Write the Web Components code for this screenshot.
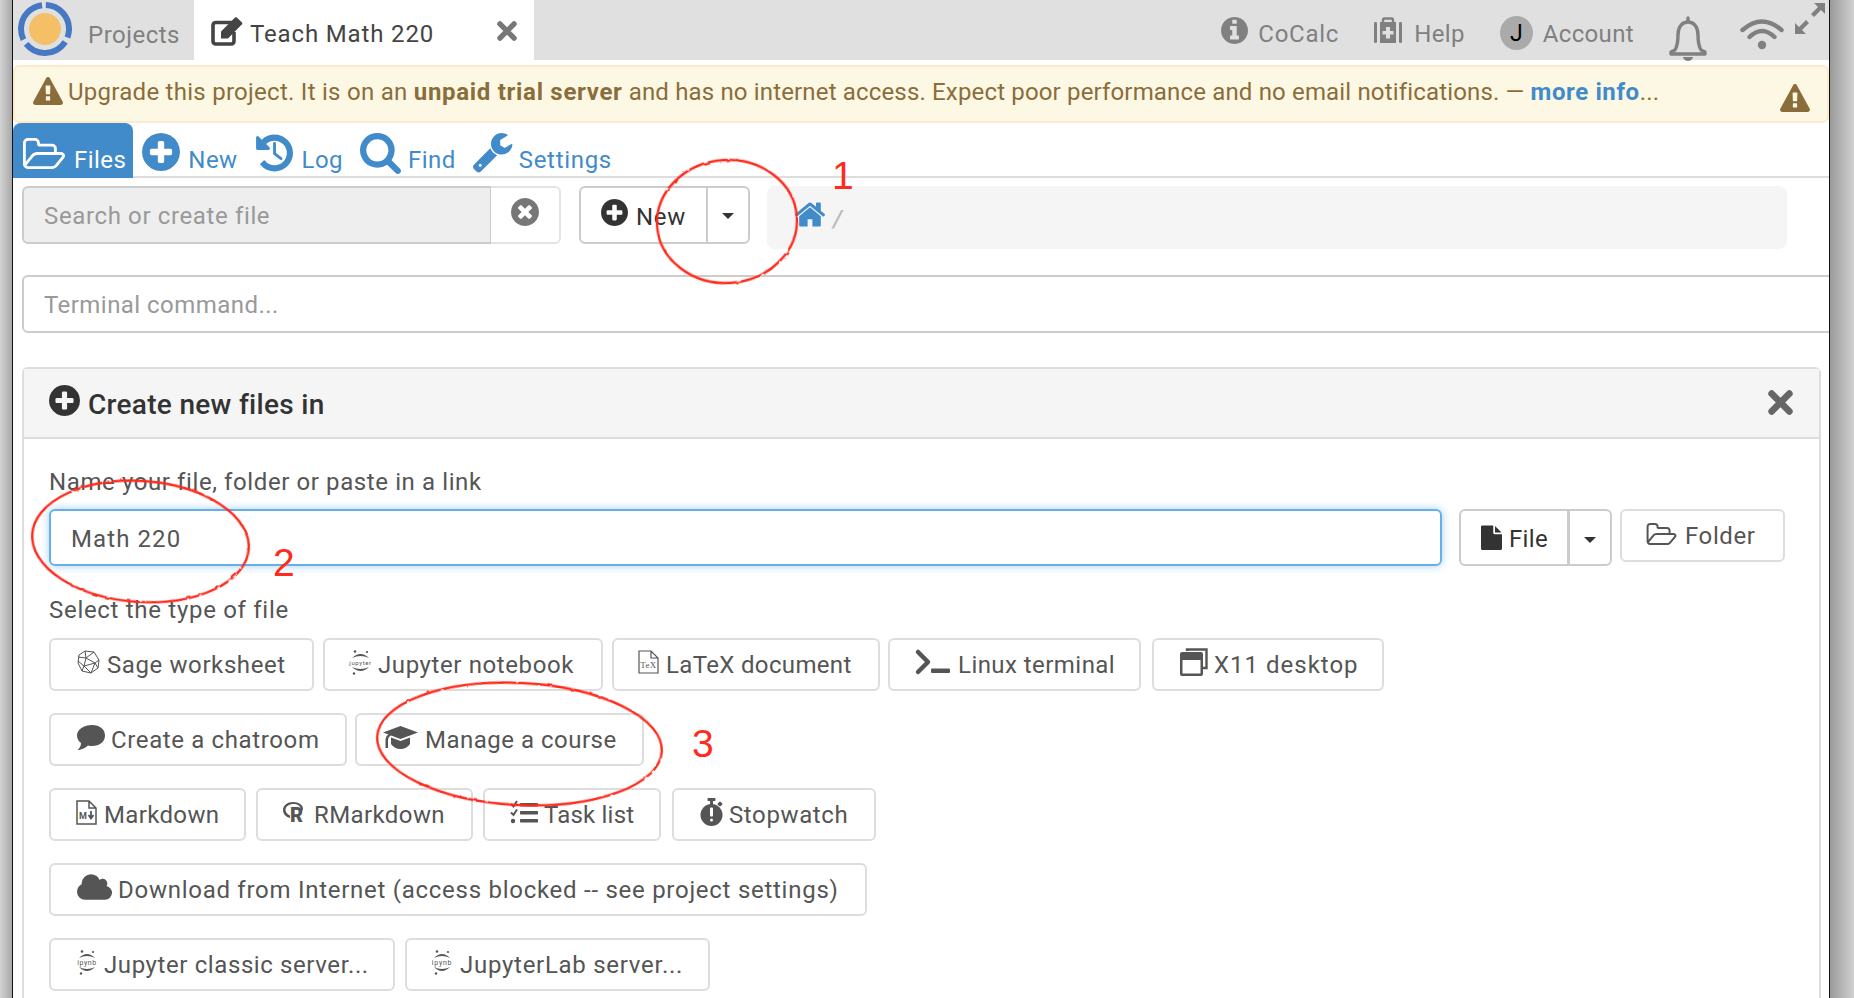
<!DOCTYPE html>
<html>
<head>
<meta charset="utf-8">
<title>Teach Math 220</title>
<style>
  html, body { margin: 0; padding: 0; height: 100%; overflow: hidden; background: #fff; }
  body { font-family: Roboto, "Liberation Sans", sans-serif; font-size: 24px; color: #555; }
</style>
</head>
<body>

<cc-window>
  <cc-topbar>
    <cc-project-tab slot="left">Projects</cc-project-tab>
    <cc-file-tab slot="left">Teach Math 220</cc-file-tab>
    <cc-nav-item slot="right" icon="info" iw="27" ih="27" gap="10" mr="35" ls=".75">CoCalc</cc-nav-item>
    <cc-nav-item slot="right" icon="medkit" iw="28" ih="26" gap="12" mr="35">Help</cc-nav-item>
    <cc-nav-item slot="right" icon="avatar" iw="33" ih="34" gap="10" mr="34" drop="3">Account</cc-nav-item>
    <cc-nav-item slot="right" icon="bell" iw="40" ih="45" gap="0" mr="32" drop="8"></cc-nav-item>
    <cc-nav-item slot="right" icon="wifi" iw="44" ih="30" gap="0" mr="11" drop="4"></cc-nav-item>
    <cc-nav-item slot="right" icon="expand" iw="30" ih="31" gap="0" mr="4" drop="-12"></cc-nav-item>
  </cc-topbar>

  <cc-alert><span style="letter-spacing:.27px">Upgrade this project. It is on an </span><b>unpaid trial server</b><span style="letter-spacing:.16px"> and has no internet access. Expect poor performance and no email notifications. — </span><a>more info</a>...</cc-alert>

  <cc-tabs>
    <cc-tab-link active icon="folder" iw="44" ih="31" gap="8" left="9" right="7">Files</cc-tab-link>
    <cc-tab-link icon="plus" iw="38" ih="38" gap="8" left="9" right="15">New</cc-tab-link>
    <cc-tab-link icon="history" iw="40" ih="40" gap="9" left="0" right="17">Log</cc-tab-link>
    <cc-tab-link icon="search" iw="41" ih="41" gap="7" left="0" right="16">Find</cc-tab-link>
    <cc-tab-link icon="wrench" iw="41" ih="40" gap="6" left="0" right="0" ls=".7">Settings</cc-tab-link>
  </cc-tabs>

  <cc-toolbar></cc-toolbar>
  <cc-terminal>Terminal command...</cc-terminal>

  <cc-panel>
    <span slot="title">Create new files in</span>

    <cc-label>Name your file, folder or paste in a link</cc-label>
    <cc-name-row>Math 220</cc-name-row>
    <cc-label second>Select the type of file</cc-label>

    <cc-btn-row>
      <cc-btn w="265" ls=".6" icon="sage" iw="23" ih="24" gap="7" style="margin-right:-2px">Sage worksheet</cc-btn>
      <cc-btn w="280" pad="25" ls=".6" icon="jupyter" iw="21" ih="25" gap="7" style="margin-right:-2px">Jupyter notebook</cc-btn>
      <cc-btn w="268" pad="24" icon="latex" iw="21" ih="24" gap="7" style="margin-right:-3px">LaTeX document</cc-btn>
      <cc-btn w="253" pad="25" ls=".45" icon="terminal" iw="35" ih="24" gap="8">Linux terminal</cc-btn>
      <cc-btn w="232" ls="1" icon="x11" iw="28" ih="28" gap="6">X11 desktop</cc-btn>
    </cc-btn-row>
    <cc-btn-row>
      <cc-btn w="298" ls=".63" icon="comment" iw="28" ih="25" gap="6" style="margin-right:-3px">Create a chatroom</cc-btn>
      <cc-btn w="289" ls=".5" icon="cap" iw="35" ih="23" gap="7">Manage a course</cc-btn>
    </cc-btn-row>
    <cc-btn-row>
      <cc-btn w="197" pad="25" icon="markdown" iw="21" ih="25" gap="7" style="margin-right:-1px">Markdown</cc-btn>
      <cc-btn w="217" pad="25" ls=".4" icon="rlogo" iw="22" ih="21" gap="9" style="margin-right:-1px">RMarkdown</cc-btn>
      <cc-btn w="178" pad="25" ls=".2" icon="tasks" iw="28" ih="24" gap="6">Task list</cc-btn>
      <cc-btn w="204" ls=".62" icon="stopwatch" iw="23" ih="28" gap="6">Stopwatch</cc-btn>
    </cc-btn-row>
    <cc-btn-row>
      <cc-btn w="818" ls=".73" icon="cloud" iw="35" ih="26" gap="6">Download from Internet (access blocked -- see project settings)</cc-btn>
    </cc-btn-row>
    <cc-btn-row>
      <cc-btn w="346" ls=".6" icon="ipynb" iw="20" ih="25" gap="7" style="margin-right:-1px">Jupyter classic server...</cc-btn>
      <cc-btn w="305" pad="25" ls=".72" icon="ipynb" iw="20" ih="25" gap="8">JupyterLab server...</cc-btn>
    </cc-btn-row>
  </cc-panel>

  <cc-mark slot="overlay" x="656" y="159" w="142" h="125" tilt="-4"></cc-mark>
  <cc-mark slot="overlay" x="31" y="480" w="219" h="123" tilt="4"></cc-mark>
  <cc-mark slot="overlay" x="376" y="682" w="287" h="124" tilt="3"></cc-mark>
  <cc-digit slot="overlay" x="832" y="153">1</cc-digit>
  <cc-digit slot="overlay" x="273" y="540">2</cc-digit>
  <cc-digit slot="overlay" x="692" y="721">3</cc-digit>
</cc-window>

<script>
const ICONS = {
  plus: ['128 128 1536 1536', '<path d="M1344 960v-128q0-26-19-45t-45-19h-256v-256q0-26-19-45t-45-19h-128q-26 0-45 19t-19 45v256h-256q-26 0-45 19t-19 45v128q0 26 19 45t45 19h256v256q0 26 19 45t45 19h128q26 0 45-19t19-45v-256h256q26 0 45-19t19-45zm320-64q0 209-103 385.5t-279.5 279.5-385.5 103-385.5-103-279.5-279.5-103-385.5 103-385.5 279.5-279.5 385.5-103 385.5 103 279.5 279.5 103 385.5z"/>'],
  timesCircle: ['128 128 1536 1536', '<path d="M1277 1122q0-26-19-45l-181-181 181-181q19-19 19-45 0-27-19-46l-90-90q-19-19-46-19-26 0-45 19l-181 181-181-181q-19-19-45-19-27 0-46 19l-90 90q-19 19-19 46 0 26 19 45l181 181-181 181q-19 19-19 45 0 27 19 46l90 90q19 19 46 19 26 0 45-19l181-181 181 181q19 19 45 19 27 0 46-19l90-90q19-19 19-46zm387-226q0 209-103 385.5t-279.5 279.5-385.5 103-385.5-103-279.5-279.5-103-385.5 103-385.5 279.5-279.5 385.5-103 385.5 103 279.5 279.5 103 385.5z"/>'],
  info: ['128 128 1536 1536', '<path d="M1152 1376v-160q0-14-9-23t-23-9h-96v-512q0-14-9-23t-23-9h-320q-14 0-23 9t-9 23v160q0 14 9 23t23 9h96v320h-96q-14 0-23 9t-9 23v160q0 14 9 23t23 9h448q14 0 23-9t9-23zm-128-896v-160q0-14-9-23t-23-9h-192q-14 0-23 9t-9 23v160q0 14 9 23t23 9h192q14 0 23-9t9-23zm640 416q0 209-103 385.5t-279.5 279.5-385.5 103-385.5-103-279.5-279.5-103-385.5 103-385.5 279.5-279.5 385.5-103 385.5 103 279.5 279.5 103 385.5z"/>'],
  times: ['0 0 24 24', '<path d="M3.500 3.500l17 17M20.500 3.500l-17 17" fill="none" stroke="currentColor" stroke-width="6.400" stroke-linecap="round"/>'],
  warning: ['0 64 1792 1600', '<path d="M1024 1375v-190q0-14-9.5-23.5t-22.5-9.5h-192q-13 0-22.5 9.5t-9.5 23.5v190q0 14 9.5 23.5t22.5 9.5h192q13 0 22.5-9.5t9.5-23.5zm-2-374l18-459q0-12-10-19-13-11-24-11h-220q-11 0-24 11-10 7-10 21l17 457q0 10 10 16.5t24 6.5h185q14 0 23.5-6.5t10.5-16.5zm-14-934l768 1408q35 63-2 126-17 29-46.5 46t-63.5 17h-1536q-34 0-63.5-17t-46.5-46q-37-63-2-126l768-1408q17-31 47-49t65-18 65 18 47 49z"/>'],
  edit: ['0 0 32 29', '<path d="M21 5.500H5q-3 0-3 3V24q0 3 3 3h15q3 0 3-3V15" fill="none" stroke="currentColor" stroke-width="3.600"/><path d="M10 14.500L24 .5q1-.6 1.800 0l5.200 5q.7.9 0 1.800L17 21.500h-7z"/>'],
  folder: ['0 128 1909 1408', '<path d="M1781 931q0-35-53-35h-1088q-40 0-85.5 21.5t-71.5 52.5l-294 363q-18 24-18 40 0 35 53 35h1088q40 0 86-22t71-53l294-363q18-22 18-39zm-1141-163h768v-160q0-40-28-68t-68-28h-576q-40 0-68-28t-28-68v-64q0-40-28-68t-68-28h-320q-40 0-68 28t-28 68v853l256-315q44-53 116-87.5t140-34.5zm1269 163q0 62-46 120l-295 363q-43 53-116 87.5t-140 34.5h-1088q-92 0-158-66t-66-158v-960q0-92 66-158t158-66h320q92 0 158 66t66 158v32h544q92 0 158 66t66 158v160h192q54 0 99 24.5t67 70.5q15 32 15 68z"/>'],
  history: ['0 128 1664 1536', '<path d="M1664 896q0 156-61 298t-164 245-245 164-298 61q-172 0-327-72.5t-264-204.5q-7-10-6.5-22.5t8.5-20.5l137-138q10-9 25-9 16 2 23 12 73 95 179 147t225 52q104 0 198.5-40.5t163.5-109.5 109.5-163.5 40.5-198.5-40.5-198.5-109.5-163.5-163.5-109.5-198.5-40.5q-98 0-188 35.5t-160 101.5l137 138q31 30 14 69-17 40-59 40h-448q-26 0-45-19t-19-45v-448q0-42 40-59 39-17 69 14l130 129q107-101 244.5-156.5t284.5-55.5q156 0 298 61t245 164 164 245 61 298z"/><path d="M896 500v420l270 210" fill="none" stroke="currentColor" stroke-width="120" stroke-linecap="round" stroke-linejoin="round"/>'],
  search: ['64 128 1664 1664', '<path d="M1216 832q0-185-131.5-316.5t-316.5-131.5-316.5 131.5-131.5 316.5 131.5 316.5 316.5 131.5 316.5-131.5 131.5-316.5zm512 832q0 52-38 90t-90 38q-54 0-90-38l-343-342q-179 124-399 124-143 0-273.5-55.5t-225-150-150-225-55.5-273.5 55.5-273.5 150-225 225-150 273.5-55.5 273.5 55.5 225 150 150 225 55.5 273.5q0 220-124 399l343 343q37 37 37 90z"/>'],
  wrench: ['64 128 1664 1664', '<path d="M448 1472q0-26-19-45t-45-19-45 19-19 45 19 45 45 19 45-19 19-45zm644-420l-682 682q-37 37-90 37-52 0-91-37l-106-108q-38-36-38-90 0-53 38-91l681-681q39 98 114.5 173.5t173.5 114.5zm634-435q0 39-23 106-47 134-164.5 217.5t-258.5 83.5q-185 0-316.5-131.5t-131.5-316.5 131.5-316.5 316.5-131.5q58 0 121.5 16.5t107.5 46.5q16 11 16 28t-16 28l-293 169v224l193 107q5-3 79-48.5t135.5-81 70.5-35.5q15 0 23.5 10t8.5 25z"/>'],
  home: ['96 256 1600 1280', '<path d="M1472 992v480q0 26-19 45t-45 19h-384v-384h-256v384h-384q-26 0-45-19t-19-45v-480q0-1 .5-3t.5-3l575-474 575 474q1 2 1 6zm223-69l-62 74q-8 9-21 11h-3q-13 0-21-7l-692-577-692 577q-12 8-24 7-13-2-21-11l-62-74q-8-10-7-23.5t11-21.5l719-599q32-26 76-26t76 26l244 204v-195q0-14 9-23t23-9h192q14 0 23 9t9 23v408l219 182q10 8 11 21.5t-7 23.5z"/>'],
  file: ['128 40 1536 1752', '<path d="M1152 512v-472q22 14 36 28l408 408q14 14 28 36h-472zm-128 32q0 40 28 68t68 28h544v1056q0 40-28 68t-68 28h-1344q-40 0-68-28t-28-68v-1600q0-40 28-68t68-28h800v544z"/>'],
  cloud: ['-64 128 1920 1408', '<path d="M1856 1152q0 159-112.5 271.5t-271.5 112.5h-1088q-185 0-316.5-131.5t-131.5-316.5q0-132 71-241.5t187-163.5q-2-28-2-43 0-212 150-362t362-150q158 0 286.5 88t187.5 230q70-62 166-62 106 0 181 75t75 181q0 75-41 138 129 30 213 134.5t84 239.5z"/>'],
  medkit: ['0 0 28 26', '<rect x="9" y="1.500" width="10" height="5" rx="1.500" fill="none" stroke="currentColor" stroke-width="2.400"/><rect x="0" y="5" width="3" height="21" rx="1.200"/><rect x="25" y="5" width="3" height="21" rx="1.200"/><path fill-rule="evenodd" d="M6 5h16v21H6zM12 10v4H8.500v3.500H12v4h4v-4h3.500V14H16v-4z"/>'],
  avatar: ['0 0 33 34', '<ellipse cx="16.500" cy="17" rx="16.500" ry="17" fill="#aaa"/><text x="16.500" y="25" text-anchor="middle" font-family="Roboto, sans-serif" font-size="23" fill="#000">J</text>'],
  bell: ['0 0 40 45', '<path d="M20 2v4M7 34c3-5 3-10 3-15 0-8 4-13 10-13s10 5 10 13c0 5 0 10 3 15l4 2v2H3v-2z" fill="none" stroke="currentColor" stroke-width="3.400" stroke-linejoin="round" stroke-linecap="round"/><path d="M15 41h10q-1 4-5 4t-5-4z"/>'],
  wifi: ['0 0 44 30', '<path d="M2.500 11Q22-6 41.500 11M9.500 18Q22 6 34.500 18" fill="none" stroke="currentColor" stroke-width="4.400" stroke-linecap="round"/><circle cx="22" cy="26" r="4.200"/>'],
  expand: ['0 0 30 31', '<path d="M19 0h11v11l-4-4-7 7-3-3 7-7zM0 31V20l4 4 7-7 3 3-7 7 4 4z"/>'],
  sage: ['0 0 23 24', '<g fill="none" stroke="currentColor" stroke-width="1"><path d="M8 1l9 1 5 8-1 8-7 5-9-2-4-8 1-8zM8 1l1 7 8-6M9 8l-8-1M9 8l-2 8 7 7M9 8l9 5 4-3M18 13l-4 10M18 13l3 5M7 16l-6-5M7 16l-2 5M7 16l11-3"/></g>'],
  jupyter: ['0 0 21 25', '<path d="M2 8Q10.500 0 19 8 10.500 4 2 8zM2 17Q10.500 25 19 17 10.500 21 2 17z"/><circle cx="5" cy="1.500" r="1.300"/><circle cx="17" cy="2" r="1.100"/><circle cx="4" cy="23.500" r="1.200"/><text x="10.500" y="14.500" text-anchor="middle" font-family="Roboto, sans-serif" font-size="6">jupyter</text>'],
  ipynb: ['0 0 20 25', '<path d="M2 8Q10 0 18 8 10 4 2 8zM2 17Q10 25 18 17 10 21 2 17z"/><circle cx="5" cy="1.500" r="1.300"/><circle cx="16" cy="2" r="1.100"/><circle cx="4" cy="23.500" r="1.200"/><text x="10" y="14.500" text-anchor="middle" font-family="Roboto, sans-serif" font-size="7">ipynb</text>'],
  latex: ['0 0 21 24', '<path d="M1 1h12l7 7v15H1zM13 1v7h7" fill="none" stroke="currentColor" stroke-width="1.200"/><text x="10.500" y="18" text-anchor="middle" font-family="Liberation Serif, serif" font-size="9">TeX</text>'],
  markdown: ['0 0 21 25', '<path d="M1 1h12l7 7v16H1zM13 1v7h7" fill="none" stroke="currentColor" stroke-width="1.500"/><text x="3" y="19" font-family="Roboto, sans-serif" font-weight="700" font-size="9">M</text><path d="M15 11v6M12.500 15l2.500 3.500 2.500-3.500" fill="none" stroke="currentColor" stroke-width="1.800"/>'],
  rlogo: ['0 0 22 21', '<path fill-rule="evenodd" d="M10 0c6 0 10 3 10 6.500 0 1.500-.7 2.800-2 3.800h-2.500C17 9.300 17.500 8 17.500 6.800 17.500 4 14.500 2 10.500 2 6 2 2.500 4.500 2.500 8c0 2.500 2 4.500 4.500 5.500V16C3 15 0 12 0 8 0 3.500 4.500 0 10 0z"/><text x="7" y="20" font-family="Roboto, sans-serif" font-weight="900" font-size="20">R</text>'],
  tasks: ['0 0 28 24', '<path d="M1 4l2.500 2.500L7 1M1 12.500l2.500 2.500L7 9.500" fill="none" stroke="currentColor" stroke-width="2"/><circle cx="3" cy="21" r="2.200"/><rect x="10" y="3" width="18" height="3.500" rx=".8"/><rect x="10" y="11" width="18" height="3.500" rx=".8"/><rect x="10" y="19" width="18" height="3.500" rx=".8"/>'],
  stopwatch: ['0 0 23 28', '<rect x="7.500" y="0" width="8" height="3" rx=".8"/><rect x="10" y="2" width="3" height="5"/><rect x="18" y="4" width="4" height="4" rx="1" transform="rotate(45 20 6)"/><circle cx="11.500" cy="17" r="11"/><rect x="10" y="9.500" width="3" height="9" rx="1" fill="#fff"/><circle cx="11.500" cy="22" r="1.500" fill="#fff"/>'],
  terminal: ['0 0 35 24', '<path d="M3 2l10 10L3 22" fill="none" stroke="currentColor" stroke-width="4.500" stroke-linecap="round" stroke-linejoin="round"/><rect x="16" y="18.500" width="19" height="4.500" rx="1"/>'],
  x11: ['0 0 28 28', '<path d="M7 3V1.500h19.500V20H23" fill="none" stroke="currentColor" stroke-width="2.400"/><path fill-rule="evenodd" d="M2 4h19q2 0 2 2v20q0 2-2 2H2q-2 0-2-2V6q0-2 2-2zM2.500 12v13.500h18V12z"/>'],
  comment: ['0 0 28 25', '<path d="M15 0C23 0 28 4.500 28 10.500S23 21 15 21q-2 0-4-.5C9 22.500 5 25 .5 25c2-1.500 3.500-4 3.500-7C1.500 16 0 13.500 0 10.500 0 4.500 7 0 15 0z"/>'],
  cap: ['0 0 35 23', '<path d="M17.500 0L35 6.500 17.500 13 8 9.500C6 10.500 5 12 5 14.500V22H2.500v-7.500c0-3 1-5 3-6L0 6.500z"/><path d="M8 11.500l9.500 3.500L27 11.500V18q-3.500 5-9.500 5T8 18z"/>']
}

class CcIcon extends HTMLElement {
  connectedCallback() {
    const [box, body] = ICONS[this.getAttribute('name')]
    const w = this.getAttribute('w'), h = this.getAttribute('h')
    this.attachShadow({ mode: 'open' }).innerHTML = `
      <style>
        :host { display: block; flex: none; width: ${w}px; height: ${h}px; }
        svg { display: block; width: 100%; height: 100%; fill: currentColor; overflow: visible; }
      </style>
      <svg viewBox="${box}" aria-hidden="true">${body}</svg>`
  }
}

const windowTemplate = document.createElement('template')
windowTemplate.innerHTML = `
  <style>
    :host { display: flex; width: 1854px; height: 998px; overflow: hidden; position: relative; }
    .gutter-left { flex: none; width: 13px; background: linear-gradient(90deg, #d4d4d4, #a8a8a8); border-right: 1px solid #111; box-sizing: border-box; }
    .gutter-right { flex: none; width: 25px; background: linear-gradient(90deg, #9a9a9a, #d0d0d0); border-left: 1px solid #111; box-sizing: border-box; }
    .main { flex: none; width: 1816px; overflow: hidden; background: #fff; }
  </style>
  <div class="gutter-left"></div>
  <div class="main"><slot></slot></div>
  <div class="gutter-right"></div>
  <slot name="overlay"></slot>
`
class CcWindow extends HTMLElement {
  constructor() {
    super()
    this.attachShadow({ mode: 'open' }).appendChild(windowTemplate.content.cloneNode(true))
  }
}

const topbarTemplate = document.createElement('template')
topbarTemplate.innerHTML = `
  <style>
    :host { display: flex; height: 60px; background: #e0e0e0; justify-content: space-between; letter-spacing: .35px; }
    .side { display: flex; align-items: stretch; }
  </style>
  <div class="side"><slot name="left"></slot></div>
  <div class="side"><slot name="right"></slot></div>
`
class CcTopbar extends HTMLElement {
  constructor() {
    super()
    this.attachShadow({ mode: 'open' }).appendChild(topbarTemplate.content.cloneNode(true))
  }
}

class CcProjectTab extends HTMLElement {
  constructor() {
    super()
    this.attachShadow({ mode: 'open' }).innerHTML = `
      <style>
        :host { display: flex; width: 181px; height: 60px; color: #808080; box-sizing: border-box; padding-left: 5px; align-items: flex-start; letter-spacing: .5px; }
        .logo { width: 54px; height: 54px; margin-top: 2px; flex: none; }
        span { margin-left: 16px; line-height: 70px; }
      </style>
      <svg class="logo" viewBox="0 0 54 54">
        <circle cx="27" cy="27" r="24" fill="none" stroke="#4678c4" stroke-width="6" stroke-dasharray="45.300 5" transform="rotate(-88 27 27)"/>
        <circle cx="27" cy="27" r="16" fill="#f5bf68"/>
      </svg>
      <span><slot></slot></span>`
  }
}

class CcFileTab extends HTMLElement {
  constructor() {
    super()
    this.attachShadow({ mode: 'open' }).innerHTML = `
      <style>
        :host { display: flex; width: 340px; height: 60px; background: #fff; color: #444; align-items: center; box-sizing: border-box; padding: 0 17px 0 17px; letter-spacing: .85px; }
        .pen { position: relative; top: 1px; }
        span { flex: 1; margin-left: 7px; position: relative; top: 4px; }
        .x { color: #777; position: relative; top: 1px; }
      </style>
      <cc-icon class="pen" name="edit" w="32" h="29"></cc-icon>
      <span><slot></slot></span>
      <cc-icon class="x" name="times" w="20" h="20"></cc-icon>`
  }
}

class CcNavItem extends HTMLElement {
  connectedCallback() {
    const a = n => this.getAttribute(n)
    this.attachShadow({ mode: 'open' }).innerHTML = `
      <style>
        :host { display: flex; align-items: center; color: #808080; margin-right: ${a('mr')}px; height: 60px; letter-spacing: ${a('ls') || '.35'}px; }
        cc-icon { position: relative; top: ${a('drop') || 0}px; margin-right: ${a('gap')}px; }
        span { position: relative; top: 4px; }
      </style>
      <cc-icon name="${a('icon')}" w="${a('iw')}" h="${a('ih')}"></cc-icon>
      <span><slot></slot></span>`
  }
}

class CcAlert extends HTMLElement {
  constructor() {
    super()
    this.attachShadow({ mode: 'open' }).innerHTML = `
      <style>
        :host { display: flex; height: 58px; margin-top: 5px; background: #fcf8e3; border: 2px solid #faebcc; border-radius: 6px; box-sizing: border-box; color: #8a6d3b; align-items: center; padding: 0 17px 0 18px; letter-spacing: .2px; }
        .text { flex: 1; margin-left: 5px; margin-bottom: 4px; white-space: pre; }
        ::slotted(a) { color: #428bca; font-weight: 700; letter-spacing: .6px; }
        ::slotted(b) { font-weight: 700; letter-spacing: .7px; }
        .first { margin-bottom: 6px; }
        .last { margin-top: 8px; }
      </style>
      <cc-icon class="first" name="warning" w="30" h="27"></cc-icon>
      <div class="text"><slot></slot></div>
      <cc-icon class="last" name="warning" w="30" h="27"></cc-icon>`
  }
}

class CcTabs extends HTMLElement {
  constructor() {
    super()
    this.attachShadow({ mode: 'open' }).innerHTML = `
      <style>
        :host { display: flex; height: 55px; border-bottom: 2px solid #ddd; box-sizing: border-box; align-items: stretch; }
      </style>
      <slot></slot>`
  }
}

class CcTabLink extends HTMLElement {
  connectedCallback() {
    const a = n => this.getAttribute(n)
    const active = this.hasAttribute('active')
    this.attachShadow({ mode: 'open' }).innerHTML = `
      <style>
        :host { display: flex; height: 55px; box-sizing: border-box; padding: 0 ${a('right')}px 0 ${a('left')}px; align-items: flex-start;
          color: ${active ? '#fff' : '#428bca'}; background: ${active ? '#428bca' : 'transparent'}; border-radius: ${active ? '8px 8px 0 0' : '0'}; letter-spacing: ${a('ls') || '.45'}px; }
        cc-icon { margin-top: ${active ? 15 : 10}px; margin-right: ${a('gap')}px; }
        span { line-height: 30px; margin-top: 22px; }
      </style>
      <cc-icon name="${a('icon')}" w="${a('iw')}" h="${a('ih')}"></cc-icon>
      <span><slot></slot></span>`
  }
}

class CcToolbar extends HTMLElement {
  constructor() {
    super()
    this.attachShadow({ mode: 'open' }).innerHTML = `
      <style>
        :host { display: flex; padding: 8px 0 0 9px; align-items: flex-start; height: 89px; box-sizing: border-box; letter-spacing: .63px; }
        .search { width: 469px; height: 58px; background: #eee; border: 2px solid #ccc; border-right: 1px solid #ccc; border-radius: 6px 0 0 6px; box-sizing: border-box; color: #999; padding-left: 20px; line-height: 56px; }
        .clear { width: 70px; height: 58px; border: 2px solid #e4e4e4; border-left: 0; border-radius: 0 6px 6px 0; box-sizing: border-box; display: flex; align-items: center; justify-content: center; color: #777; padding-bottom: 6px; }
        .group { display: flex; margin-left: 18px; height: 58px; width: 171px; border: 2px solid #ccc; border-radius: 6px; box-sizing: border-box; color: #333; }
        .new { border-right: 2px solid #ccc; display: flex; align-items: center; padding-left: 20px; width: 105px; letter-spacing: .7px; }
        .new span { margin-left: 8px; position: relative; top: 2px; }
        .new cc-icon { margin-bottom: 6px; }
        .caret { flex: 1; display: flex; align-items: center; justify-content: center; }
        .caret i { border: 6px solid transparent; border-top-color: #333; border-bottom: 0; margin-top: 2px; }
        .path { margin-left: 17px; width: 1020px; height: 63px; background: #f5f5f5; border-radius: 8px; display: flex; align-items: center; padding-left: 28px; box-sizing: border-box; color: #bbb; }
        .path cc-icon { color: #428bca; margin-bottom: 7px; }
        .path span { font-style: italic; font-weight: 500; margin-left: 8px; margin-top: 2px; }
      </style>
      <div class="search">Search or create file</div>
      <div class="clear"><cc-icon name="timesCircle" w="28" h="28"></cc-icon></div>
      <div class="group">
        <div class="new"><cc-icon name="plus" w="27" h="27"></cc-icon><span>New</span></div>
        <div class="caret"><i></i></div>
      </div>
      <div class="path"><cc-icon name="home" w="30" h="25"></cc-icon><span>/</span></div>`
  }
}

class CcTerminal extends HTMLElement {
  constructor() {
    super()
    this.attachShadow({ mode: 'open' }).innerHTML = `
      <style>
        :host { display: block; margin: 8px 0 0 9px; width: 1830px; height: 58px; border: 2px solid #ccc; border-radius: 6px; box-sizing: border-box; color: #999; padding-left: 20px; line-height: 56px; letter-spacing: .45px; }
      </style>
      <slot></slot>`
  }
}

const panelTemplate = document.createElement('template')
panelTemplate.innerHTML = `
  <style>
    :host { display: block; margin: 34px 0 0 9px; width: 1799px; border: 2px solid #ddd; border-radius: 6px; box-sizing: border-box; }
    header { display: flex; align-items: center; height: 70px; background: #f5f5f5; border-bottom: 2px solid #ddd; box-sizing: border-box; padding: 0 26px 0 25px; color: #333; font-size: 28px; font-weight: 500; letter-spacing: .3px; }
    header span { flex: 1; margin-left: 8px; position: relative; top: 1px; }
    header .pi { margin-bottom: 5px; }
    header .x { color: #666; margin-bottom: 2px; }
    .body { padding: 29px 25px 0 25px; }
  </style>
  <header>
    <cc-icon class="pi" name="plus" w="31" h="31"></cc-icon>
    <span><slot name="title"></slot></span>
    <cc-icon class="x" name="times" w="25" h="25"></cc-icon>
  </header>
  <div class="body"><slot></slot></div>
`
class CcPanel extends HTMLElement {
  constructor() {
    super()
    this.attachShadow({ mode: 'open' }).appendChild(panelTemplate.content.cloneNode(true))
  }
}

class CcLabel extends HTMLElement {
  connectedCallback() {
    const second = this.hasAttribute('second')
    this.attachShadow({ mode: 'open' }).innerHTML = `
      <style>
        :host { display: block; color: #555; line-height: 26px; letter-spacing: ${second ? '.7' : '.6'}px; margin-bottom: 15px; position: relative; top: ${second ? 0 : 1}px; }
      </style>
      <slot></slot>`
  }
}

class CcNameRow extends HTMLElement {
  constructor() {
    super()
    this.attachShadow({ mode: 'open' }).innerHTML = `
      <style>
        :host { display: flex; align-items: flex-start; height: 88px; }
        .input { width: 1393px; height: 57px; border: 2px solid #66afe9; border-radius: 6px; box-sizing: border-box; padding-left: 20px; color: #555; line-height: 56px; box-shadow: 0 0 9px rgba(102,175,233,.6); letter-spacing: 1.1px; }
        .group { display: flex; margin-left: 17px; width: 153px; height: 57px; border: 2px solid #ccc; border-radius: 6px; box-sizing: border-box; color: #333; letter-spacing: .35px; }
        .file { width: 109px; border-right: 3px solid #ccc; display: flex; align-items: center; padding-left: 20px; box-sizing: border-box; }
        .file span { margin-left: 7px; margin-top: 2px; }
        .caret { flex: 1; display: flex; align-items: center; justify-content: center; }
        .caret i { border: 6px solid transparent; border-top-color: #333; border-bottom: 0; margin-top: 4px; }
        .folder { margin-left: 8px; width: 165px; height: 53px; border: 2px solid #ddd; border-radius: 6px; box-sizing: border-box; display: flex; align-items: center; padding-left: 24px; color: #555; letter-spacing: .6px; }
        .folder span { margin-left: 8px; }
        .folder cc-icon { margin-bottom: 4px; }
      </style>
      <div class="input"><slot></slot></div>
      <div class="group">
        <div class="file"><cc-icon name="file" w="21" h="28"></cc-icon><span>File</span></div>
        <div class="caret"><i></i></div>
      </div>
      <div class="folder"><cc-icon name="folder" w="31" h="22"></cc-icon><span>Folder</span></div>`
  }
}

class CcBtnRow extends HTMLElement {
  constructor() {
    super()
    this.attachShadow({ mode: 'open' }).innerHTML = `
      <style>
        :host { display: flex; gap: 11px; margin-bottom: 22px; }
      </style>
      <slot></slot>`
  }
}

class CcBtn extends HTMLElement {
  connectedCallback() {
    const a = n => this.getAttribute(n)
    this.attachShadow({ mode: 'open' }).innerHTML = `
      <style>
        :host { display: flex; align-items: center; flex: none; width: ${a('w')}px; height: 53px; border: 2px solid #ddd; border-radius: 6px; box-sizing: border-box; padding-left: ${a('pad') || 26}px; color: #555; letter-spacing: ${a('ls') || '.35'}px; white-space: nowrap; }
        cc-icon { margin-right: ${a('gap')}px; margin-bottom: 5px; }
      </style>
      <cc-icon name="${a('icon')}" w="${a('iw')}" h="${a('ih')}"></cc-icon>
      <slot></slot>`
  }
}

// hand drawn circles and numbers on top of the screenshot
class CcMark extends HTMLElement {
  connectedCallback() {
    const a = n => parseFloat(this.getAttribute(n))
    const w = a('w'), h = a('h')
    this.attachShadow({ mode: 'open' }).innerHTML = `
      <style>
        :host { position: absolute; left: ${a('x')}px; top: ${a('y')}px; width: ${w}px; height: ${h}px; pointer-events: none; }
        svg { display: block; overflow: visible; }
      </style>
      <svg width="${w}" height="${h}">
        <filter id="rough" x="-10%" y="-10%" width="120%" height="120%">
          <feTurbulence type="fractalNoise" baseFrequency=".12" numOctaves="2" seed="4"/>
          <feDisplacementMap in="SourceGraphic" scale="2.500"/>
        </filter>
        <ellipse filter="url(#rough)" cx="${w / 2}" cy="${h / 2}" rx="${w / 2 - 1}" ry="${h / 2 - 1}" fill="none" stroke="#ff2a1c" stroke-width="2.400" transform="rotate(${a('tilt')} ${w / 2} ${h / 2})"/>
      </svg>`
  }
}

class CcDigit extends HTMLElement {
  connectedCallback() {
    this.attachShadow({ mode: 'open' }).innerHTML = `
      <style>
        :host { position: absolute; left: ${this.getAttribute('x')}px; top: ${this.getAttribute('y')}px; color: #ff2a1c; font: 39px/45px "Liberation Sans", sans-serif; }
      </style>
      <slot></slot>`
  }
}

const elements = {
  'cc-icon': CcIcon, 'cc-window': CcWindow, 'cc-topbar': CcTopbar, 'cc-project-tab': CcProjectTab,
  'cc-file-tab': CcFileTab, 'cc-nav-item': CcNavItem, 'cc-alert': CcAlert, 'cc-tabs': CcTabs,
  'cc-tab-link': CcTabLink, 'cc-toolbar': CcToolbar, 'cc-terminal': CcTerminal, 'cc-panel': CcPanel,
  'cc-label': CcLabel, 'cc-name-row': CcNameRow, 'cc-btn-row': CcBtnRow, 'cc-btn': CcBtn,
  'cc-mark': CcMark, 'cc-digit': CcDigit
}
Object.keys(elements).forEach(name => window.customElements.define(name, elements[name]))
</script>
</body>
</html>
